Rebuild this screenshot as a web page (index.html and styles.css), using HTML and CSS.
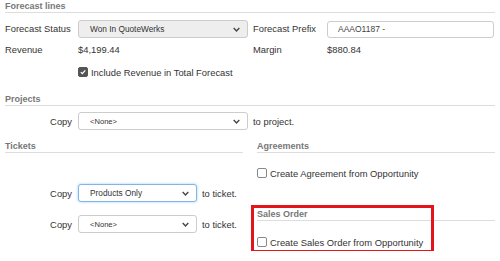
FILE: index.html
```html
<!DOCTYPE html>
<html lang="en">
<head>
  <meta charset="UTF-8">
  <title>Opportunity Conversion</title>
  <link rel="stylesheet" href="styles.css">
</head>
<body>
  <div class="page">

    <div class="section-title">Forecast lines</div>
    <div class="forecast-grid">
      <span class="field-label">Forecast Status</span>
      <div class="select select-disabled">
        <span>Won In QuoteWerks</span>
        <svg class="chevron" viewBox="0 0 10 6"><path d="M1 1 L5 5 L9 1"/></svg>
      </div>
      <span class="field-label">Forecast Prefix</span>
      <div class="text-input">AAAO1187 -</div>

      <span class="field-label">Revenue</span>
      <span class="value">$4,199.44</span>
      <span class="field-label">Margin</span>
      <span class="value">$880.84</span>

      <span></span>
      <label class="check-row wide">
        <span class="checkbox checked">
          <svg viewBox="0 0 10 10"><path d="M2.3 5.2 L4.2 7.1 L7.8 3"/></svg>
        </span>
        Include Revenue in Total Forecast
      </label>
    </div>

    <div class="section-title projects-title">Projects</div>
    <div class="copy-row projects-row">
      <span class="copy-label">Copy</span>
      <div class="select select-wide">
        <span class="small-text">&lt;None&gt;</span>
        <svg class="chevron" viewBox="0 0 10 6"><path d="M1 1 L5 5 L9 1"/></svg>
      </div>
      <span class="after">to project.</span>
    </div>

    <div class="columns">
      <div class="col">
        <div class="section-title">Tickets</div>
        <div class="copy-row ticket-first">
          <span class="copy-label">Copy</span>
          <div class="select select-short select-focus">
            <span>Products Only</span>
            <svg class="chevron" viewBox="0 0 10 6"><path d="M1 1 L5 5 L9 1"/></svg>
          </div>
          <span class="after">to ticket.</span>
        </div>
        <div class="copy-row ticket-second">
          <span class="copy-label">Copy</span>
          <div class="select select-short">
            <span class="small-text">&lt;None&gt;</span>
            <svg class="chevron" viewBox="0 0 10 6"><path d="M1 1 L5 5 L9 1"/></svg>
          </div>
          <span class="after">to ticket.</span>
        </div>
      </div>

      <div class="col">
        <div class="section-title">Agreements</div>
        <label class="check-row agreement-row">
          <span class="checkbox"></span>
          Create Agreement from Opportunity
        </label>

        <div class="sales-order">
          <div class="section-title">Sales Order</div>
          <label class="check-row sales-row">
            <span class="checkbox"></span>
            Create Sales Order from Opportunity
          </label>
          <div class="highlight"></div>
        </div>
      </div>
    </div>

  </div>
</body>
</html>
```

FILE: styles.css
```css
body {
  margin: 0;
  font-family: Arial, "Liberation Sans", sans-serif;
  font-size: 9.4px;
  color: #333;
  background-color: #fff;
}

.page {
  padding: 1px 5px 0;
}

.section-title {
  font-weight: bold;
  font-size: 9px;
  line-height: 11px;
  color: #777;
  border-bottom: 1px solid #ddd;
}

.forecast-grid {
  display: grid;
  grid-template-columns: 73px 175px 74px 167px;
  grid-template-rows: 18px 20px 20px;
  row-gap: 2px;
  align-items: center;
  margin-top: 7px;
}

.field-label,
.value {
  line-height: 12px;
}

.wide {
  grid-column: 2 / 5;
}

.select {
  box-sizing: border-box;
  height: 18px;
  width: 170px;
  display: flex;
  align-items: center;
  justify-content: space-between;
  padding: 0 7px 0 11px;
  border: 1px solid #ccc;
  border-radius: 3px;
  background-color: #fff;
  font-size: 8.3px;
  color: #333;
}

.select-disabled {
  background-color: #eee;
}

.select-short {
  width: 119px;
}

.select-focus {
  border-color: #7fb6e6;
  box-shadow: 0 0 3px rgba(102, 175, 233, 0.6);
}

.small-text {
  font-size: 7.6px;
}

.chevron {
  width: 7px;
  height: 5px;
  fill: none;
  stroke: #444;
  stroke-width: 2;
}

.text-input {
  box-sizing: border-box;
  height: 17px;
  display: flex;
  align-items: center;
  padding-left: 10px;
  border: 1px solid #ccc;
  border-radius: 3px;
  font-size: 8.5px;
  color: #444;
}

.check-row {
  display: flex;
  align-items: center;
  height: 18px;
  font-size: 9.4px;
}

.checkbox {
  box-sizing: border-box;
  width: 10px;
  height: 10px;
  margin-right: 3px;
  border: 1px solid #888;
  border-radius: 2px;
  background-color: #fff;
  display: flex;
}

.checkbox.checked {
  border-color: #555;
  background-color: #555;
}

.checkbox svg {
  width: 8px;
  height: 8px;
  fill: none;
  stroke: #fff;
  stroke-width: 1.6;
}

.projects-title {
  margin-top: 12px;
}

.copy-row {
  display: flex;
  align-items: center;
  height: 18px;
}

.copy-label {
  width: 73px;
  box-sizing: border-box;
  padding-right: 6px;
  text-align: right;
}

.select-wide {
  width: 170px;
}

.after {
  margin-left: 5px;
}

.projects-row {
  margin-top: 6px;
}

.columns {
  display: grid;
  grid-template-columns: 238px 238px;
  column-gap: 14px;
  margin-top: 11px;
}

.ticket-first {
  margin-top: 31px;
}

.ticket-second {
  margin-top: 13px;
}

.agreement-row {
  margin-top: 11px;
}

.sales-order {
  position: relative;
  margin-top: 27px;
}

.sales-row {
  margin-top: 12px;
}

.highlight {
  position: absolute;
  left: -6px;
  top: -4px;
  width: 183px;
  height: 48px;
  box-sizing: border-box;
  border: 3px solid #e3151a;
}
```
